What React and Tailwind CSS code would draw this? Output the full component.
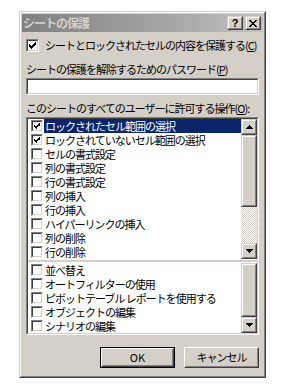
import React from "react";

function Raised({ className = "", children }) {
  return (
    <div className={`border border-t-[#d4d0c8] border-l-[#d4d0c8] border-r-[#404040] border-b-[#404040] bg-[#d4d0c8] ${className}`}>
      <div className="w-full h-full border border-t-white border-l-white border-r-[#808080] border-b-[#808080] flex items-center justify-center">
        {children}
      </div>
    </div>
  );
}

function Check({ checked, big }) {
  return (
    <div className={`${big ? "w-[13px] h-[13px]" : "w-[12px] h-[12px]"} shrink-0 border border-t-[#808080] border-l-[#808080] border-r-white border-b-white`}>
      <div className="w-full h-full border border-t-[#404040] border-l-[#404040] border-r-[#d4d0c8] border-b-[#d4d0c8] bg-white flex items-center justify-center">
        {checked && (
          <svg width={big ? 9 : 8} height={big ? 9 : 8} viewBox="0 0 9 9" shapeRendering="crispEdges">
            <path d="M1 3h1v3h-1z M2 4h1v3h-1z M3 5h1v3h-1z M4 4h1v3h-1z M5 3h1v3h-1z M6 2h1v3h-1z M7 1h1v3h-1z" fill="#000" />
          </svg>
        )}
      </div>
    </div>
  );
}

function ArrowUp() {
  return (
    <svg width="7" height="4" viewBox="0 0 7 4" shapeRendering="crispEdges">
      <path d="M3 0h1v1h-1z M2 1h3v1h-3z M1 2h5v1h-5z M0 3h7v1h-7z" fill="#000" />
    </svg>
  );
}
function ArrowDown() {
  return (
    <svg width="7" height="4" viewBox="0 0 7 4" shapeRendering="crispEdges">
      <path d="M0 0h7v1h-7z M1 1h5v1h-5z M2 2h3v1h-3z M3 3h1v1h-1z" fill="#000" />
    </svg>
  );
}

function Row({ label, checked, selected }) {
  return (
    <div className="h-[14px] flex items-center">
      <div className="pl-[3px] pr-[1px] h-full flex items-center">
        <Check checked={checked} />
      </div>
      <div className={`flex-1 h-full pl-[1px] leading-[14px] whitespace-nowrap overflow-hidden ${selected ? "bg-[#0a246a] text-white" : "text-black"}`}>
        {label}
      </div>
    </div>
  );
}

const pane1 = [
  ["ロックされたセル範囲の選択", true, true],
  ["ロックされていないセル範囲の選択", true, false],
  ["セルの書式設定", false, false],
  ["列の書式設定", false, false],
  ["行の書式設定", false, false],
  ["列の挿入", false, false],
  ["行の挿入", false, false],
  ["ハイパーリンクの挿入", false, false],
  ["列の削除", false, false],
  ["行の削除", false, false],
];
const pane2 = [
  "並べ替え",
  "オートフィルターの使用",
  "ピボットテーブル レポートを使用する",
  "オブジェクトの編集",
  "シナリオの編集",
];

export default function App() {
  return (
    <div className="w-[282px] h-[390px] bg-white pt-[11px] pl-[19px] font-['Noto_Sans_CJK_JP',sans-serif] text-[11px] tracking-[-1px] text-black">
      <div className="w-[247px] h-[367px] border border-t-[#d4d0c8] border-l-[#d4d0c8] border-r-[#404040] border-b-[#404040] bg-[#d4d0c8]">
        <div className="w-full h-full border border-t-white border-l-white border-r-[#808080] border-b-[#808080] p-[1px] flex flex-col">
          {/* title bar */}
          <div className="h-[18px] bg-linear-to-r from-[#808080] to-[#c0c0c0] flex items-center pl-[1px] pr-[2px]">
            <div className="flex-1 text-[12px] font-bold text-[#d4d0c8] leading-[18px]">シートの保護</div>
            <Raised className="w-[16px] h-[14px]">
              <span className="text-[11px] font-bold leading-none tracking-normal font-['Liberation_Sans',sans-serif]">?</span>
            </Raised>
            <Raised className="w-[16px] h-[14px] ml-[2px]">
              <svg width="8" height="7" viewBox="0 0 8 7" shapeRendering="crispEdges">
                <path d="M0 0h2v1h-2z M6 0h2v1h-2z M1 1h2v1h-2z M5 1h2v1h-2z M2 2h4v1h-4z M3 3h2v1h-2z M2 4h4v1h-4z M1 5h2v1h-2z M5 5h2v1h-2z M0 6h2v1h-2z M6 6h2v1h-2z" fill="#000" />
              </svg>
            </Raised>
          </div>

          {/* content */}
          <div className="pl-[4px] pr-[4px] pt-[6px] flex flex-col">
            <div className="h-[14px] flex items-center">
              <Check checked big />
              <span className="ml-[6px] leading-[14px] whitespace-nowrap">
                シートとロックされたセルの内容を保護する(<span className="underline">C</span>)
              </span>
            </div>
            <div className="mt-[10px] h-[14px] leading-[14px] whitespace-nowrap">
              シートの保護を解除するためのパスワード(<span className="underline">P</span>)
            </div>
            <div className="mt-[2px] h-[17px] border border-t-[#808080] border-l-[#808080] border-r-white border-b-white">
              <div className="w-full h-full border border-t-[#404040] border-l-[#404040] border-r-[#d4d0c8] border-b-[#d4d0c8] bg-white" />
            </div>
            <div className="mt-[6px] h-[14px] leading-[14px] whitespace-nowrap">
              このシートのすべてのユーザーに許可する操作(<span className="underline">O</span>):
            </div>

            {/* list */}
            <div className="mt-[2px] h-[218px] border border-t-[#808080] border-l-[#808080] border-r-white border-b-white">
              <div className="w-full h-full border border-t-[#404040] border-l-[#404040] border-r-[#d4d0c8] border-b-[#d4d0c8] bg-white flex flex-col">
                <div className="h-[140px] flex">
                  <div className="flex-1 flex flex-col">
                    {pane1.map(([l, c, s]) => (
                      <Row key={l} label={l} checked={c} selected={s} />
                    ))}
                  </div>
                  <div className="w-[16px] flex flex-col">
                    <Raised className="h-[16px]"><ArrowUp /></Raised>
                    <Raised className="h-[72px]" />
                    <div className="h-[36px] bg-[image:repeating-conic-gradient(#ffffff_0_25%,#d4d0c8_0_50%)] bg-size-[2px_2px]" />
                    <Raised className="h-[16px]"><ArrowDown /></Raised>
                  </div>
                </div>
                <div className="h-[4px] flex flex-col">
                  <div className="h-[1px] bg-white" />
                  <div className="h-[2px] bg-[#d4d0c8]" />
                  <div className="h-[1px] bg-white" />
                </div>
                <div className="h-[70px] flex">
                  <div className="flex-1 flex flex-col">
                    {pane2.map((l) => (
                      <Row key={l} label={l} checked={false} selected={false} />
                    ))}
                  </div>
                  <div className="w-[16px] flex flex-col">
                    <Raised className="h-[54px]" />
                    <Raised className="h-[16px]"><ArrowDown /></Raised>
                  </div>
                </div>
              </div>
            </div>

            {/* buttons */}
            <div className="mt-[12px] flex justify-end gap-[9px]">
              <div className="w-[75px] h-[21px] border border-black">
                <div className="w-full h-full border border-t-white border-l-white border-r-[#404040] border-b-[#404040]">
                  <div className="w-full h-full border border-t-[#d4d0c8] border-l-[#d4d0c8] border-r-[#808080] border-b-[#808080] flex items-center justify-center leading-none tracking-normal">
                    OK
                  </div>
                </div>
              </div>
              <div className="w-[75px] h-[21px] border border-t-white border-l-white border-r-[#404040] border-b-[#404040]">
                <div className="w-full h-full border border-t-[#d4d0c8] border-l-[#d4d0c8] border-r-[#808080] border-b-[#808080] flex items-center justify-center leading-none">
                  キャンセル
                </div>
              </div>
            </div>
          </div>
        </div>
      </div>
    </div>
  );
}
